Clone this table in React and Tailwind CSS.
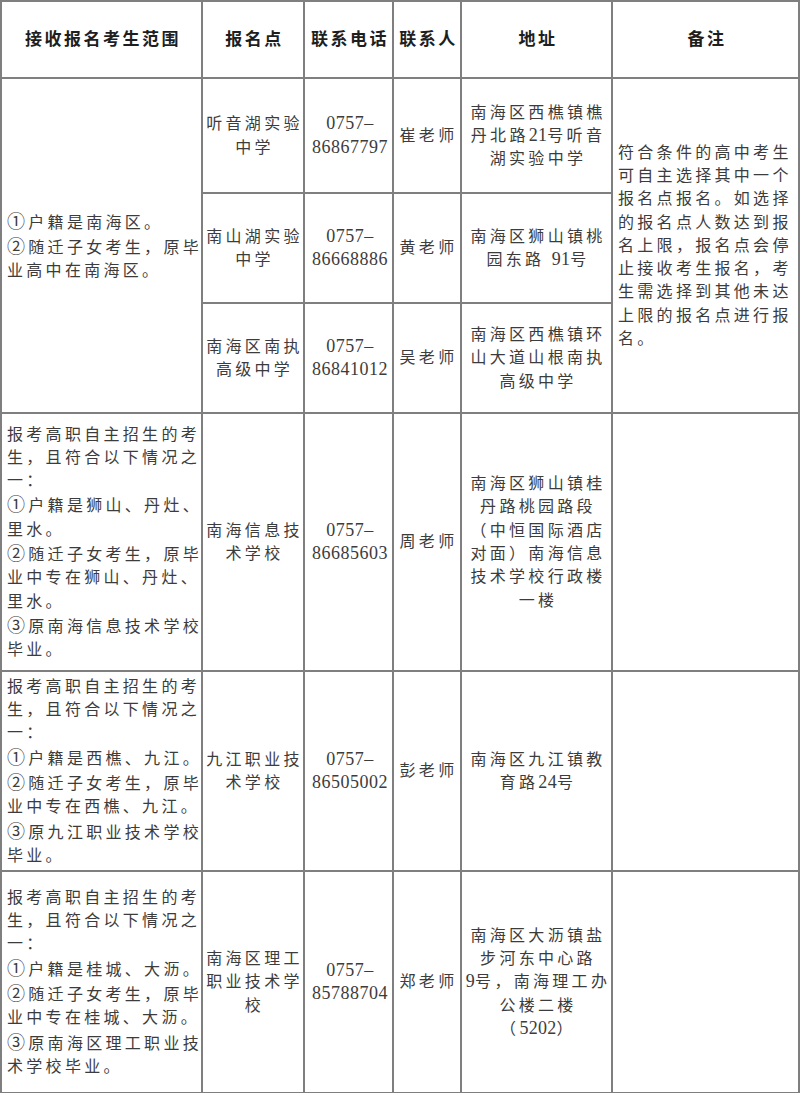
import React from "react";

const FONT = "[font-family:'Liberation_Serif','Noto_Sans_CJK_SC',serif]";
const CJK = "[font-family:'Noto_Sans_CJK_SC',sans-serif] text-[18px]";

// digit runs use a taller serif face with tight spacing; circled numbers come from the CJK face
function fmt(str, digitClass) {
  return str.split(/(\d+|[①②③–])/).map((part, i) => {
    if (/^[\d–]+$/.test(part)) {
      return (
        <span key={i} className={digitClass}>
          {part}
        </span>
      );
    }
    if (/^[①②③]$/.test(part)) {
      return (
        <span key={i} className={CJK}>
          {part}
        </span>
      );
    }
    return part;
  });
}

function Lines({ lines, align = "center", digitClass = "text-[18px] tracking-[0.3px]" }) {
  return (
    <div className={align === "left" ? "pl-[5px] text-left" : "pl-[3px] text-center"}>
      {lines.map((l, i) => (
        <div key={i} className="whitespace-nowrap">
          {fmt(l, digitClass)}
        </div>
      ))}
    </div>
  );
}

const cell = "border-2 border-[#7f7f7f] p-0 align-middle";

const headers = ["接收报名考生范围", "报名点", "联系电话", "联系人", "地址", "备注"];

const nanhaiSites = [
  {
    h: "h-[115px]",
    site: ["听音湖实验", "中学"],
    phone: ["0757–", "86867797"],
    person: "崔老师",
    addr: ["南海区西樵镇樵", "丹北路21号听音", "湖实验中学"],
  },
  {
    h: "h-[110px]",
    site: ["南山湖实验", "中学"],
    phone: ["0757–", "86668886"],
    person: "黄老师",
    addr: ["南海区狮山镇桃", "园东路 91号"],
  },
  {
    h: "h-[110px]",
    site: ["南海区南执", "高级中学"],
    phone: ["0757–", "86841012"],
    person: "吴老师",
    addr: ["南海区西樵镇环", "山大道山根南执", "高级中学"],
  },
];

const vocational = [
  {
    h: "h-[258px]",
    scope: [
      "报考高职自主招生的考",
      "生，且符合以下情况之",
      "一：",
      "①户籍是狮山、丹灶、",
      "里水。",
      "②随迁子女考生，原毕",
      "业中专在狮山、丹灶、",
      "里水。",
      "③原南海信息技术学校",
      "毕业。",
    ],
    site: ["南海信息技", "术学校"],
    phone: ["0757–", "86685603"],
    person: "周老师",
    addr: ["南海区狮山镇桂", "丹路桃园路段", "（中恒国际酒店", "对面）南海信息", "技术学校行政楼", "一楼"],
  },
  {
    h: "h-[200px]",
    scope: [
      "报考高职自主招生的考",
      "生，且符合以下情况之",
      "一：",
      "①户籍是西樵、九江。",
      "②随迁子女考生，原毕",
      "业中专在西樵、九江。",
      "③原九江职业技术学校",
      "毕业。",
    ],
    site: ["九江职业技", "术学校"],
    phone: ["0757–", "86505002"],
    person: "彭老师",
    addr: ["南海区九江镇教", "育路24号"],
  },
  {
    h: "h-[222px]",
    scope: [
      "报考高职自主招生的考",
      "生，且符合以下情况之",
      "一：",
      "①户籍是桂城、大沥。",
      "②随迁子女考生，原毕",
      "业中专在桂城、大沥。",
      "③原南海区理工职业技",
      "术学校毕业。",
    ],
    site: ["南海区理工", "职业技术学", "校"],
    phone: ["0757–", "85788704"],
    person: "郑老师",
    addr: ["南海区大沥镇盐", "步河东中心路", "9号，南海理工办", "公楼二楼", "（5202）"],
  },
];

const note = [
  "符合条件的高中考生",
  "可自主选择其中一个",
  "报名点报名。如选择",
  "的报名点人数达到报",
  "名上限，报名点会停",
  "止接收考生报名，考",
  "生需选择到其他未达",
  "上限的报名点进行报",
  "名。",
];

export default function App() {
  return (
    <div className={`w-[800px] bg-white ${FONT}`}>
      <table className="w-[800px] table-fixed border-collapse text-[16px] leading-[23.3px] tracking-[3.3px] text-[#3c3c3c]">
        <colgroup>
          <col className="w-[201px]" />
          <col className="w-[102px]" />
          <col className="w-[89px]" />
          <col className="w-[68px]" />
          <col className="w-[151px]" />
          <col className="w-[187px]" />
        </colgroup>
        <thead>
          <tr className="h-[77px]">
            {headers.map((h) => (
              <th key={h} className={`${cell} pl-[3px] text-center text-[17px] font-bold tracking-[2.5px] text-[#1e1e1e]`}>
                {h}
              </th>
            ))}
          </tr>
        </thead>
        <tbody>
          {nanhaiSites.map((s, i) => (
            <tr key={s.person} className={s.h}>
              {i === 0 && (
                <td rowSpan={3} className={cell}>
                  <Lines align="left" lines={["①户籍是南海区。", "②随迁子女考生，原毕", "业高中在南海区。"]} />
                </td>
              )}
              <td className={cell}>
                <Lines lines={s.site} />
              </td>
              <td className={cell}>
                <Lines lines={s.phone} digitClass="text-[18px] tracking-[0.5px]" />
              </td>
              <td className={cell}>
                <Lines lines={[s.person]} />
              </td>
              <td className={cell}>
                <Lines lines={s.addr} />
              </td>
              {i === 0 && (
                <td rowSpan={3} className={cell}>
                  <Lines align="left" lines={note} />
                </td>
              )}
            </tr>
          ))}
          {vocational.map((s) => (
            <tr key={s.person} className={s.h}>
              <td className={cell}>
                <Lines align="left" lines={s.scope} />
              </td>
              <td className={cell}>
                <Lines lines={s.site} />
              </td>
              <td className={cell}>
                <Lines lines={s.phone} digitClass="text-[18px] tracking-[0.5px]" />
              </td>
              <td className={cell}>
                <Lines lines={[s.person]} />
              </td>
              <td className={cell}>
                <Lines lines={s.addr} />
              </td>
              <td className={cell}></td>
            </tr>
          ))}
        </tbody>
      </table>
    </div>
  );
}
